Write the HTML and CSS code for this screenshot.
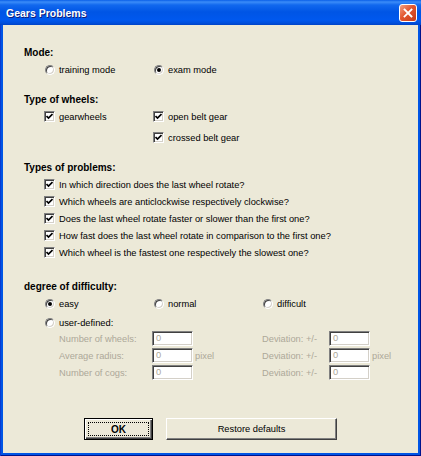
FILE: index.html
```html
<!DOCTYPE html>
<html lang="en">
<head>
    <meta charset="UTF-8">
    <title>Gears Problems</title>
    <link rel="stylesheet" href="styles.css">
</head>
<body>
<div class="window">
    <div class="titlebar">
        <span class="title">Gears Problems</span>
        <span class="close">
            <svg width="10" height="10" viewBox="0 0 10 10"><path d="M1.5 1.5 L8.5 8.5 M8.5 1.5 L1.5 8.5" stroke="#fff" stroke-width="1.8" stroke-linecap="square"/></svg>
        </span>
    </div>

    <div class="client">
        <div class="section">
            <div class="heading">Mode:</div>
            <div class="options">
                <div class="option"><span class="radio"></span>training mode</div>
                <div class="option"><span class="radio checked"></span>exam mode</div>
            </div>
        </div>

        <div class="section">
            <div class="heading">Type of wheels:</div>
            <div class="options wheels">
                <div class="option"><span class="check"><svg width="7" height="7" viewBox="0 0 7 7"><path d="M0.5 3 L2.5 5 L6.5 1" fill="none" stroke="#000" stroke-width="1.7"/></svg></span>gearwheels</div>
                <div class="option"><span class="check"><svg width="7" height="7" viewBox="0 0 7 7"><path d="M0.5 3 L2.5 5 L6.5 1" fill="none" stroke="#000" stroke-width="1.7"/></svg></span>open belt gear</div>
                <div class="option second"><span class="check"><svg width="7" height="7" viewBox="0 0 7 7"><path d="M0.5 3 L2.5 5 L6.5 1" fill="none" stroke="#000" stroke-width="1.7"/></svg></span>crossed belt gear</div>
            </div>
        </div>

        <div class="section">
            <div class="heading">Types of problems:</div>
            <div class="problems">
                <div class="option"><span class="check"><svg width="7" height="7" viewBox="0 0 7 7"><path d="M0.5 3 L2.5 5 L6.5 1" fill="none" stroke="#000" stroke-width="1.7"/></svg></span>In which direction does the last wheel rotate?</div>
                <div class="option"><span class="check"><svg width="7" height="7" viewBox="0 0 7 7"><path d="M0.5 3 L2.5 5 L6.5 1" fill="none" stroke="#000" stroke-width="1.7"/></svg></span>Which wheels are anticlockwise respectively clockwise?</div>
                <div class="option"><span class="check"><svg width="7" height="7" viewBox="0 0 7 7"><path d="M0.5 3 L2.5 5 L6.5 1" fill="none" stroke="#000" stroke-width="1.7"/></svg></span>Does the last wheel rotate faster or slower than the first one?</div>
                <div class="option"><span class="check"><svg width="7" height="7" viewBox="0 0 7 7"><path d="M0.5 3 L2.5 5 L6.5 1" fill="none" stroke="#000" stroke-width="1.7"/></svg></span>How fast does the last wheel rotate in comparison to the first one?</div>
                <div class="option"><span class="check"><svg width="7" height="7" viewBox="0 0 7 7"><path d="M0.5 3 L2.5 5 L6.5 1" fill="none" stroke="#000" stroke-width="1.7"/></svg></span>Which wheel is the fastest one respectively the slowest one?</div>
            </div>
        </div>

        <div class="section difficulty">
            <div class="heading">degree of difficulty:</div>
            <div class="options three">
                <div class="option"><span class="radio checked"></span>easy</div>
                <div class="option"><span class="radio"></span>normal</div>
                <div class="option"><span class="radio"></span>difficult</div>
            </div>
            <div class="options user">
                <div class="option"><span class="radio"></span>user-defined:</div>
            </div>
            <div class="fields">
                <span>Number of wheels:</span>
                <span class="field">0</span>
                <span></span>
                <span>Deviation: +/-</span>
                <span class="field">0</span>
                <span></span>

                <span>Average radius:</span>
                <span class="field">0</span>
                <span class="unit">pixel</span>
                <span>Deviation: +/-</span>
                <span class="field">0</span>
                <span class="unit">pixel</span>

                <span>Number of cogs:</span>
                <span class="field">0</span>
                <span></span>
                <span>Deviation: +/-</span>
                <span class="field">0</span>
                <span></span>
            </div>
        </div>

        <div class="buttons">
            <button class="button ok">OK</button>
            <button class="button restore">Restore defaults</button>
        </div>
    </div>
</div>
</body>
</html>
```

FILE: styles.css
```css
body {
    margin: 0;
    font-family: "Liberation Sans", Arial, sans-serif;
    font-size: 9.3px;
    color: #000;
}

.window {
    width: 421px;
    height: 456px;
    display: flex;
    flex-direction: column;
    background-color: #0055e5;
    box-shadow: inset 1px 0 #0a3ad0, inset -1px 0 #00138c, inset 0 -1px #00138c;
}

.titlebar {
    flex: none;
    height: 25px;
    box-sizing: border-box;
    display: flex;
    align-items: center;
    justify-content: space-between;
    padding: 1px 4px 0 6px;
    background: linear-gradient(to bottom, #0a5fe8 0, #3b8cf8 2px, #1168ee 5px, #0055e5 12px, #0058ee 20px, #004fdc 23px, #0043c6 25px);
}

.title {
    color: #fff;
    font-weight: bold;
    font-size: 10.5px;
    text-shadow: 1px 1px #0f1d7a;
}

.close {
    width: 18px;
    height: 18px;
    box-sizing: border-box;
    border: 1px solid #fff;
    border-radius: 3px;
    background: linear-gradient(135deg, #f3a184 0, #e2562f 45%, #c73a17 100%);
    display: flex;
    align-items: center;
    justify-content: center;
}

.client {
    flex: 1;
    margin: 0 3px 3px;
    padding: 19px 21px 0;
    background-color: #ece9d8;
}

.heading {
    font-weight: bold;
    font-size: 10px;
    line-height: 17px;
}

.section + .section {
    margin-top: 13px;
}

.section.difficulty {
    margin-top: 17px;
}

.options {
    display: grid;
    grid-template-columns: 109px auto;
    padding-left: 20px;
}

.options.wheels {
    row-gap: 4px;
}

.options.three {
    grid-template-columns: 109px 109px auto;
}

.options.user {
    margin-top: 2px;
}

.second {
    grid-column: 2;
}

.problems {
    padding-left: 20px;
}

.option {
    display: flex;
    align-items: center;
    height: 17px;
    white-space: nowrap;
}

.check {
    flex: none;
    width: 11px;
    height: 11px;
    box-sizing: border-box;
    margin-right: 4px;
    background-color: #fff;
    border: 1px solid;
    border-color: #808080 #fff #fff #808080;
    box-shadow: inset 1px 1px #404040, inset -1px -1px #d4d0c8;
    display: flex;
    align-items: center;
    justify-content: center;
}

.radio {
    flex: none;
    position: relative;
    width: 10px;
    height: 10px;
    box-sizing: border-box;
    margin: 0 4px 0 1px;
    border-radius: 50%;
    background-color: #fff;
    border: 1px solid;
    border-color: #808080 #fff #fff #808080;
    box-shadow: inset 1px 1px #404040, inset -1px -1px #d4d0c8;
}

.radio.checked::after {
    content: "";
    position: absolute;
    left: 2px;
    top: 2px;
    width: 4px;
    height: 4px;
    border-radius: 50%;
    background-color: #000;
}

.fields {
    display: grid;
    grid-template-columns: 93px 41px 69px 67px 41px auto;
    grid-auto-rows: 15px;
    row-gap: 2px;
    align-items: center;
    padding-left: 35px;
    color: #aca899;
    white-space: nowrap;
}

.field {
    height: 15px;
    box-sizing: border-box;
    padding-left: 3px;
    line-height: 13px;
    background-color: #fff;
    border: 1px solid;
    border-color: #808080 #fff #fff #808080;
    box-shadow: inset 1px 1px #404040, inset -1px -1px #d4d0c8;
}

.unit {
    padding-left: 2px;
}

.buttons {
    display: flex;
    justify-content: center;
    gap: 13px;
    margin-top: 38px;
}

.button {
    height: 22px;
    box-sizing: border-box;
    padding: 0;
    font: inherit;
    color: #000;
    background-color: #ece9d8;
    border: 1px solid;
    border-color: #fff #404040 #404040 #fff;
    box-shadow: inset -1px -1px #808080;
}

.button.ok {
    position: relative;
    width: 69px;
    font-weight: bold;
    font-size: 10px;
    border-color: #000;
    box-shadow: inset 1px 1px #fff, inset -1px -1px #404040, inset -2px -2px #808080;
}

.button.ok::after {
    content: "";
    position: absolute;
    left: 3px;
    top: 3px;
    right: 3px;
    bottom: 3px;
    border: 1px dotted #000;
}

.button.restore {
    width: 171px;
}
```
